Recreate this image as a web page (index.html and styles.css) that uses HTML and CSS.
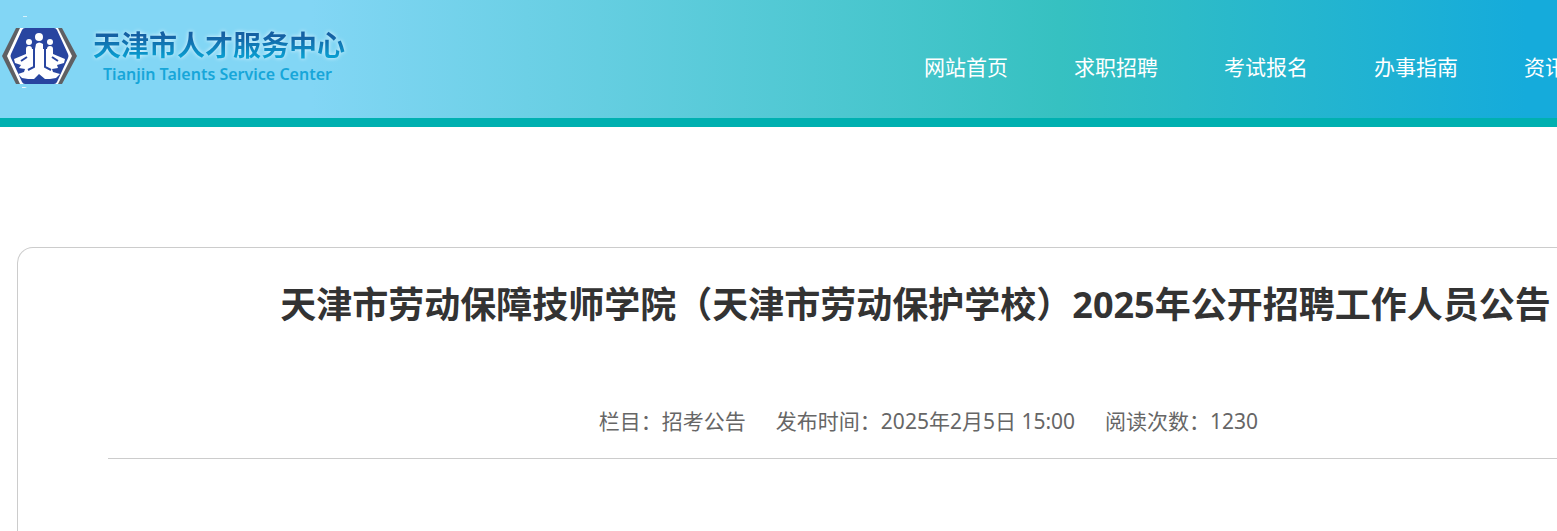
FILE: index.html
```
<!DOCTYPE html>
<html lang="zh-CN">
<head>
    <meta charset="UTF-8">
    <meta name="viewport" content="width=device-width, initial-scale=1.0">
    <title>天津市人才服务中心</title>
    <link rel="stylesheet" href="styles.css">
</head>
<body>
    <header class="header">
        <a class="logo" href="#">
            <svg class="logo-icon" viewBox="0 0 78 76" aria-hidden="true">
                <rect x="23" y="0" width="4" height="1" fill="#d5f2fc"/>
                <path d="M22 71h5l-2 1h-3z" fill="#e8f8fd"/>
                <path d="M17 12h44l15 28-15 28H17L3 40z" fill="#fff"/>
                <path d="M20 12h-4L2 40l14 28h4L7 40zM58 12h4l15 28-15 28h-4l14-28z" fill="#5f6064"/>
                <path d="M25 12h29q2 0 3 2l11 24q1 2 0 4L57 66q-1 2-3 2H25q-2 0-3-2L11 42q-1-2 0-4l11-24q1-2 3-2z" fill="#2845a0"/>
                <g fill="#fff">
                    <circle cx="39" cy="21" r="4"/>
                    <circle cx="29" cy="26" r="3"/>
                    <circle cx="50" cy="26" r="3"/>
                    <path d="M36 28q3-3 7 0v5h4q0-3 3-3t3 3v5l12 5-1 4-7 2 1 3-6 1 1 3 7 2-4 4-6 1H45l-6-5-5 5h-6l-6-1-4-4 6-2 1-3-6-1 2-3-6-2-1-4 12-5v-5q0-3 3-3t3 3h3z"/>
                </g>
                <g fill="none" stroke="#2845a0" stroke-width="2">
                    <path d="M34 31v20l-6 3M45 31v20l6 3M27 41l-6 4M52 41l6 4"/>
                </g>
            </svg>
            <span class="logo-text">
                <span class="logo-name">天津市人才服务中心</span>
                <span class="logo-en">Tianjin Talents Service Center</span>
            </span>
        </a>
        <nav class="nav">
            <a href="#">网站首页</a>
            <a href="#">求职招聘</a>
            <a href="#">考试报名</a>
            <a href="#">办事指南</a>
            <a href="#">资讯</a>
        </nav>
    </header>
    <main class="article">
        <h1 class="title">天津市劳动保障技师学院（天津市劳动保护学校）2025年公开招聘工作人员公告</h1>
        <div class="info">
            <span>栏目：招考公告</span>
            <span>发布时间：2025年2月5日 15:00</span>
            <span>阅读次数：1230</span>
        </div>
    </main>
</body>
</html>
```
FILE: styles.css
```
body {
    margin: 0;
    background-color: #fff;
    font-family: "Noto Sans", "Noto Sans CJK SC", sans-serif;
    overflow: hidden;
}
a {
    text-decoration: none;
}
.header {
    display: flex;
    align-items: flex-start;
    justify-content: space-between;
    height: 118px;
    border-bottom: 9px solid #00b0b0;
    background: linear-gradient(to right, #82d6f5 20%, #36c1c1 68%, #15abdb 98%);
}
.logo {
    display: flex;
    flex: none;
    gap: 15px;
    padding-top: 16px;
}
.logo-icon {
    width: 78px;
    height: 76px;
}
.logo-text {
    display: flex;
    flex-direction: column;
    padding-top: 11px;
}
.logo-name {
    font-size: 28px;
    line-height: 36px;
    font-weight: bold;
    color: transparent;
    background: linear-gradient(#1560a3 25%, #08a0d2 85%);
    -webkit-background-clip: text;
    background-clip: text;
    filter: drop-shadow(0 0 2px #e8f8ff);
}
.logo-en {
    padding-left: 10px;
    font-size: 16px;
    line-height: 22px;
    font-weight: 600;
    color: #17a6d9;
}
/* the menu runs past the right edge of the window */
.nav {
    display: flex;
    flex: none;
    margin-right: -42px;
    padding-top: 51px;
}
.nav a {
    padding: 0 33px;
    font-size: 21px;
    line-height: 32px;
    color: #fff;
}
.article {
    margin: 120px -283px 0 17px;
    padding: 33px 90px 0;
    min-height: 280px;
    border: 1px solid #ccc;
    border-bottom: none;
    border-radius: 16px 16px 0 0;
}
.title {
    margin: 0;
    padding-right: 26px;
    font-size: 36px;
    line-height: 48px;
    color: #333;
    text-align: center;
    white-space: nowrap;
}
.info {
    display: flex;
    justify-content: center;
    gap: 30px;
    margin-top: 75px;
    padding-bottom: 20px;
    border-bottom: 1px solid #ccc;
    font-size: 21px;
    line-height: 34px;
    color: #666;
}
```
